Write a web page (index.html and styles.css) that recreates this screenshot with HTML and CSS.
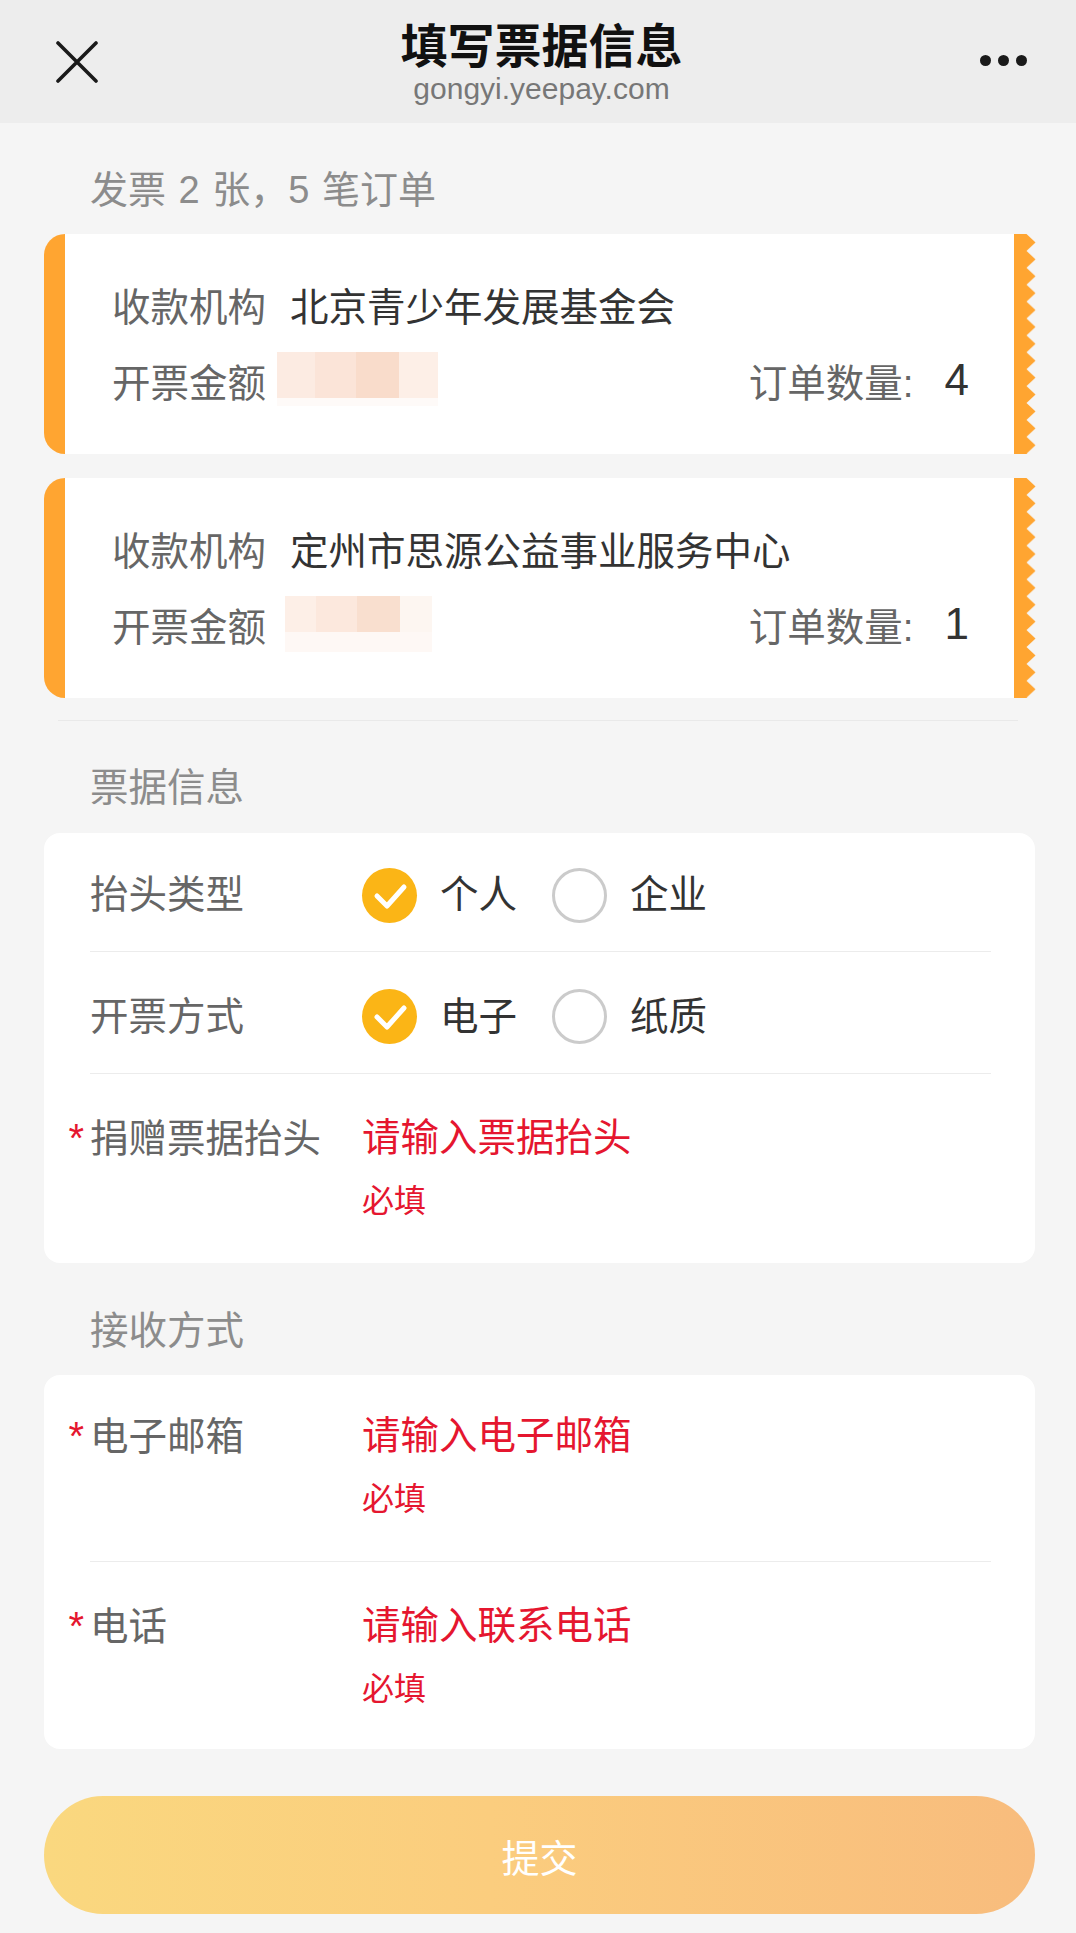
FILE: index.html
```html
<!DOCTYPE html>
<html lang="zh-CN">
<head>
<meta charset="utf-8">
<title>填写票据信息</title>
<link rel="stylesheet" href="styles.css">
</head>
<body>
<header class="nav">
  <div class="nav-left">
    <svg class="icon-close" width="42" height="42" viewBox="0 0 42 42"><path d="M2 2L40 40M40 2L2 40" stroke="#1a1a1a" stroke-width="3.6" stroke-linecap="round"/></svg>
  </div>
  <div class="nav-title">
    <div class="title">填写票据信息</div>
    <div class="domain">gongyi.yeepay.com</div>
  </div>
  <div class="nav-right">
    <span class="dot"></span><span class="dot"></span><span class="dot"></span>
  </div>
</header>

<main class="page">
  <div class="section-title first">发票 2 张，5 笔订单</div>

  <div class="tickets">
    <div class="ticket">
      <div class="ticket-body">
        <div class="t-row">
          <span class="t-label">收款机构</span>
          <span class="t-value">北京青少年发展基金会</span>
        </div>
        <div class="t-row">
          <span class="t-label">开票金额</span>
          <span class="blur blur-a"><i class="b1"></i><i class="b2"></i><i class="b3"></i><i class="b4"></i></span>
          <span class="count"><span class="count-label">订单数量:</span><span class="count-val">4</span></span>
        </div>
      </div>
      <svg class="zig" width="22" height="220" viewBox="0 0 22 220" preserveAspectRatio="none">
        <defs>
          <pattern id="teeth1" x="0" y="0" width="22" height="16.9" patternUnits="userSpaceOnUse">
            <path d="M0 0H12.5L21.5 8.45L12.5 16.9H0Z" fill="#ffa531"/>
          </pattern>
        </defs>
        <rect width="22" height="220" fill="url(#teeth1)"/>
      </svg>
    </div>

    <div class="ticket">
      <div class="ticket-body">
        <div class="t-row">
          <span class="t-label">收款机构</span>
          <span class="t-value">定州市思源公益事业服务中心</span>
        </div>
        <div class="t-row">
          <span class="t-label">开票金额</span>
          <span class="blur blur-b"><i class="b1"></i><i class="b2"></i><i class="b3"></i><i class="b4"></i></span>
          <span class="count"><span class="count-label">订单数量:</span><span class="count-val">1</span></span>
        </div>
      </div>
      <svg class="zig" width="22" height="220" viewBox="0 0 22 220" preserveAspectRatio="none">
        <defs>
          <pattern id="teeth2" x="0" y="0" width="22" height="16.9" patternUnits="userSpaceOnUse">
            <path d="M0 0H12.5L21.5 8.45L12.5 16.9H0Z" fill="#ffa531"/>
          </pattern>
        </defs>
        <rect width="22" height="220" fill="url(#teeth2)"/>
      </svg>
    </div>
  </div>

  <div class="divider"></div>

  <div class="section-title after-divider">票据信息</div>
  <div class="form-card">
    <div class="f-row radio-row">
      <span class="f-label">抬头类型</span>
      <div class="options">
        <span class="opt"><i class="radio checked"><svg width="55" height="55" viewBox="0 0 55 55"><path d="M15 28L25 38L42 19" fill="none" stroke="#fff" stroke-width="5" stroke-linecap="round" stroke-linejoin="round"/></svg></i><span class="opt-text">个人</span></span>
        <span class="opt"><i class="radio"></i><span class="opt-text">企业</span></span>
      </div>
    </div>
    <div class="f-row radio-row">
      <span class="f-label">开票方式</span>
      <div class="options">
        <span class="opt"><i class="radio checked"><svg width="55" height="55" viewBox="0 0 55 55"><path d="M15 28L25 38L42 19" fill="none" stroke="#fff" stroke-width="5" stroke-linecap="round" stroke-linejoin="round"/></svg></i><span class="opt-text">电子</span></span>
        <span class="opt"><i class="radio"></i><span class="opt-text">纸质</span></span>
      </div>
    </div>
    <div class="f-row input-row title-row">
      <span class="f-label"><span class="star">*</span>捐赠票据抬头</span>
      <div class="f-field">
        <div class="placeholder">请输入票据抬头</div>
        <div class="error">必填</div>
      </div>
    </div>
  </div>

  <div class="section-title receive">接收方式</div>
  <div class="form-card">
    <div class="f-row input-row email-row">
      <span class="f-label"><span class="star">*</span>电子邮箱</span>
      <div class="f-field">
        <div class="placeholder">请输入电子邮箱</div>
        <div class="error">必填</div>
      </div>
    </div>
    <div class="f-row input-row phone-row">
      <span class="f-label"><span class="star">*</span>电话</span>
      <div class="f-field">
        <div class="placeholder">请输入联系电话</div>
        <div class="error">必填</div>
      </div>
    </div>
  </div>

  <button class="submit" type="button">提交</button>
</main>
</body>
</html>
```

FILE: styles.css
```css
* { box-sizing: border-box; }
html, body { margin: 0; padding: 0; }
body {
  width: 1076px;
  min-height: 1933px;
  background: #f5f5f5;
  font-family: "Liberation Sans", "Noto Sans CJK SC", sans-serif;
  color: #333;
}

/* nav */
.nav {
  height: 123px;
  background: #ededed;
  display: grid;
  grid-template-columns: 1fr auto 1fr;
  align-items: center;
  padding: 0 49px 0 56px;
}
.nav-left { display: flex; align-items: center; }
.icon-close { display: block; }
.nav-title {
  align-self: start;
  padding-top: 21px;
  text-align: center;
}
.title {
  font-size: 47px;
  line-height: 52px;
  font-weight: 700;
  color: #111;
}
.domain {
  font-size: 30px;
  line-height: 32px;
  color: #777;
  font-family: "Liberation Sans", sans-serif;
}
.nav-right {
  display: flex;
  justify-content: flex-end;
  gap: 7px;
  margin-top: -3px;
}
.dot {
  width: 11px;
  height: 11px;
  border-radius: 50%;
  background: #1a1a1a;
}

/* page */
.page {
  padding: 0 41px 0 44px;
}
.section-title {
  padding: 42px 0 17px 46px;
  font-size: 38.5px;
  line-height: 52px;
  color: #8c8c8c;
}
.section-title.first { padding-top: 41px; padding-bottom: 18px; font-size: 38px; word-spacing: 2px; }
.section-title.after-divider { padding-top: 41px; padding-bottom: 19px; }
.section-title.receive { padding-bottom: 18px; }

/* tickets */
.tickets {
  display: flex;
  flex-direction: column;
  gap: 24px;
  margin-right: -1px;
}
.ticket {
  display: flex;
  height: 220px;
}
.ticket-body {
  flex: 1;
  background: #fff;
  border-left: 21px solid #ffa531;
  border-radius: 21px 0 0 21px;
  padding: 44px 45px 0 47px;
}
.zig {
  display: block;
  width: 22px;
  height: 220px;
  flex: none;
}
.t-row {
  display: flex;
  align-items: center;
  height: 52px;
  font-size: 38.5px;
}
.t-row + .t-row { margin-top: 24px; }
.t-label { color: #666; width: 154px; flex: none; }
.t-value { color: #333; margin-left: 24px; }

.blur {
  display: flex;
  flex-direction: row;
  margin-left: 11px;
  height: 46px;
}
.blur i { display: block; height: 46px; }
.blur-a { margin-top: -10px; }
.blur-a i { box-shadow: 0 8px 0 0 #fefaf8; }
.blur-a .b1 { width: 38px; background: #fcebe2; }
.blur-a .b2 { width: 41px; background: #fbe4d8; }
.blur-a .b3 { width: 43px; background: #f9dccb; }
.blur-a .b4 { width: 39px; background: #fdefe7; }
.blur-b { margin-left: 19px; height: 56px; }
.blur-b i { height: 36px; box-shadow: 0 20px 0 0 #fef8f5; }
.blur-b .b1 { width: 31px; background: #fdefe7; }
.blur-b .b2 { width: 41px; background: #fce8dd; }
.blur-b .b3 { width: 43px; background: #f9dfcf; }
.blur-b .b4 { width: 32px; background: #fdf6f1; }

.count {
  margin-left: auto;
  display: flex;
  align-items: center;
}
.count-label { color: #666; font-size: 38.5px; }
.count-val {
  color: #333;
  font-size: 44px;
  margin-left: 31px;
}

.divider {
  height: 1px;
  background: #e9e9e9;
  margin: 22px 17px 0 14px;
}

/* form */
.form-card {
  background: #fff;
  border-radius: 16px;
  padding: 0 44px 0 46px;
}
.f-row {
  display: flex;
  font-size: 38.5px;
}
.f-row + .f-row { border-top: 1px solid #ececec; }
.f-label {
  width: 272px;
  flex: none;
  color: #666;
  line-height: 52px;
}
.star {
  display: inline-block;
  width: 22px;
  margin-left: -22px;
  padding-right: 6px;
  text-align: right;
  color: #e5162f;
  font-family: "Liberation Sans", sans-serif;
  font-size: 40px;
}
.radio-row {
  height: 118px;
  padding-top: 6px;
  align-items: center;
}
.radio-row + .radio-row { height: 122px; padding-top: 8px; }
.options { display: flex; align-items: center; }
.opt { display: flex; align-items: center; }
.opt + .opt { margin-left: 35px; }
.radio {
  display: block;
  width: 55px;
  height: 55px;
  border-radius: 50%;
  border: 3px solid #cbcbcb;
}
.radio.checked {
  border: none;
  background: #fbb516;
}
.radio svg { display: block; }
.opt-text {
  margin-left: 23px;
  color: #333;
  line-height: 52px;
}
.input-row {
  padding: 38px 0 37px;
  align-items: flex-start;
}
.title-row { padding-bottom: 40px; }
.email-row { padding-top: 35px; padding-bottom: 40px; }
.phone-row { padding-bottom: 38px; }
.placeholder {
  color: #e5162f;
  line-height: 52px;
}
.error {
  color: #e5162f;
  font-size: 32px;
  line-height: 44px;
  margin-top: 15px;
}

.submit {
  display: block;
  width: 100%;
  height: 118px;
  margin-top: 47px;
  border: none;
  border-radius: 59px;
  background: linear-gradient(90deg, #fad87f 0%, #fbcd7e 45%, #f8bc7d 100%);
  color: #fff;
  font-family: "Noto Sans CJK SC", sans-serif;
  font-size: 38px;
  padding: 0;
}
```
